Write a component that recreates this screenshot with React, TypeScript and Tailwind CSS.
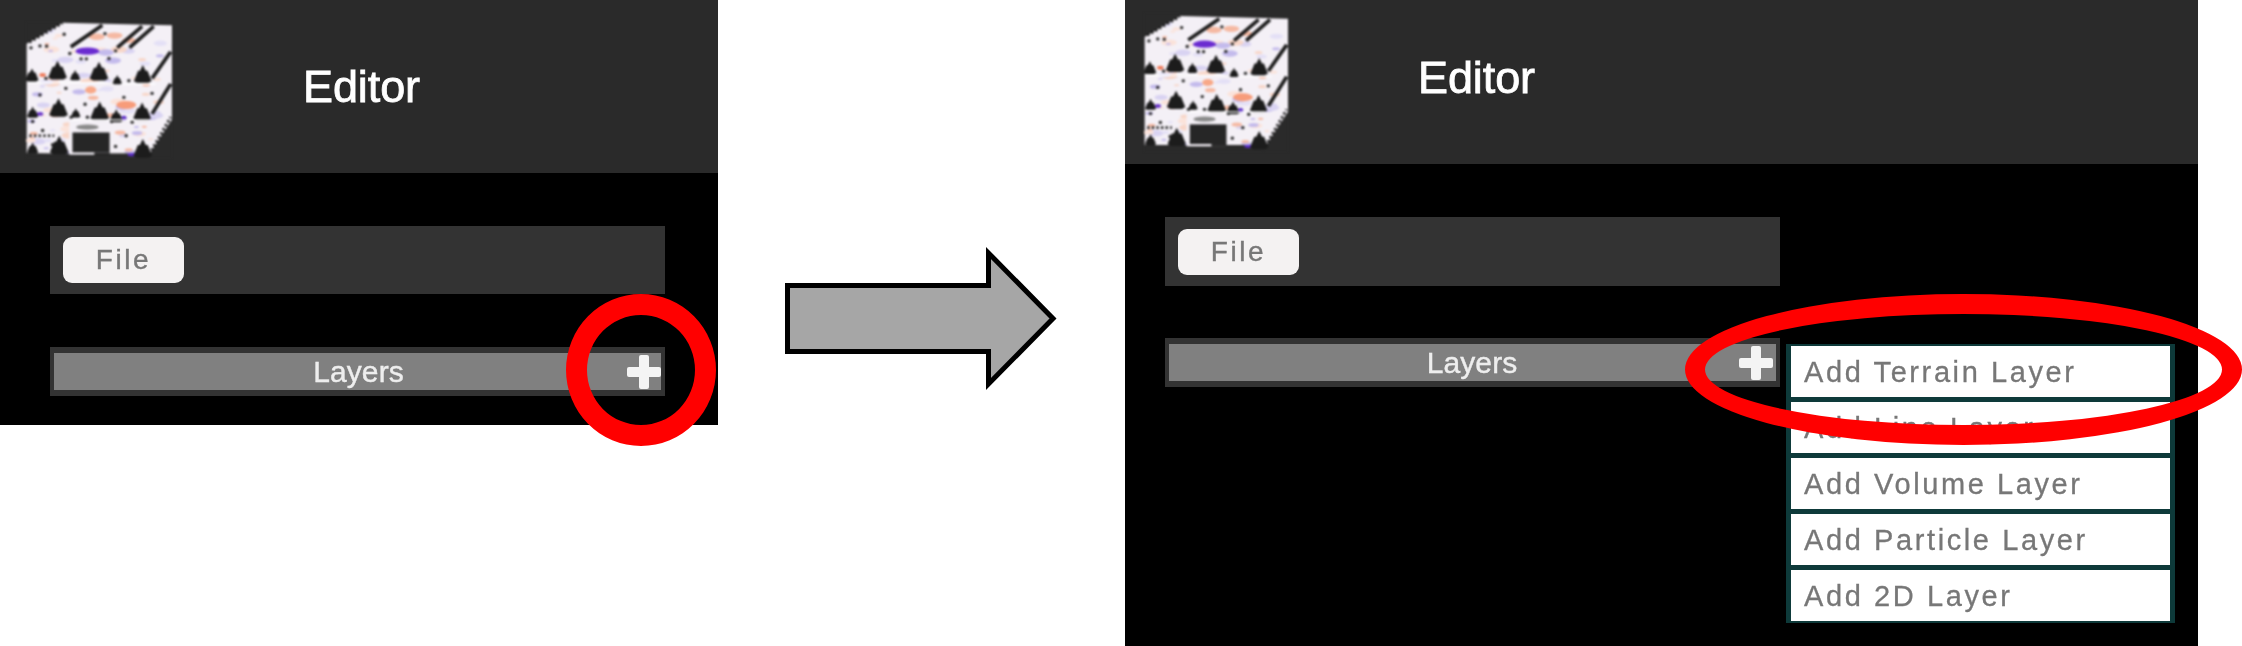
const trees = [
  [145, 152, 1], [270, 155, 1], [402, 165, 0.95], [68, 175, 0.7],
  [148, 265, 1], [272, 275, 1], [400, 278, 0.95], [70, 290, 0.6], [322, 298, 0.7],
  [150, 378, 1], [402, 388, 1], [70, 398, 0.6], [198, 180, 0.55], [325, 195, 0.5], [200, 295, 0.5],
];

const specks = [
  [65, 113], [92, 107], [112, 108], [165, 72], [182, 130], [216, 146], [232, 146], [288, 70], [320, 122],
  [110, 205], [92, 255], [228, 283], [345, 262], [370, 337], [360, 212], [382, 212], [300, 145], [170, 235],
  [352, 378], [320, 410], [130, 405], [186, 322], [235, 322], [70, 335], [100, 362], [308, 335], [430, 250],
];

// pseudo random colour noise for the cube texture
const tints = ["#d9d3f2", "#f8d6c8", "#c4bbec", "#fbe3da", "#e4e0f6", "#f5b9a3"];
const noise = Array.from({ length: 90 }, (_, i) => ({
  x: 60 + Math.abs(Math.sin(i * 12.9898) * 43758.5453) % 420,
  y: 60 + Math.abs(Math.sin(i * 78.233) * 12543.1234) % 370,
  r: 8 + (i % 5) * 4,
  fill: tints[i % tints.length],
}));

const CubeLogo = ({ className }: { className: string }) => (
  <svg viewBox="50 35 440 410" className={className}>
    <polygon points="52,100 160,37 490,45 490,330 415,445 52,430" fill="#f4f0f6" />
    <g>
      {noise.map((n, i) => (
        <ellipse key={i} cx={n.x} cy={n.y} rx={n.r} ry={n.r * 0.4} fill={n.fill} />
      ))}
    </g>
    <polygon points="0,0 160,0 160,37 52,100 0,100" fill="#2a2a2a" />
    <polygon points="490,330 540,330 540,480 415,480 415,445" fill="#2a2a2a" />
    <rect x="0" y="431" width="415" height="40" fill="#2a2a2a" />
    <ellipse cx="235" cy="123" rx="36" ry="11" fill="#6a2bd0" />
    <ellipse cx="245" cy="240" rx="17" ry="11" fill="#f8a888" />
    <ellipse cx="352" cy="285" rx="30" ry="12" fill="#f79c7a" />
    <ellipse cx="345" cy="325" rx="8" ry="7" fill="#5a2bc8" />
    <ellipse cx="92" cy="312" rx="10" ry="6" fill="#6a35c8" />
    <ellipse cx="370" cy="435" rx="14" ry="5" fill="#5a2bc8" />
    <ellipse cx="100" cy="195" rx="10" ry="6" fill="#ef7a5a" />
    {/* black trees on the front face */}
    {trees.map(([x, y, s], i) => (
      <polygon
        key={i}
        points={`${x},${y} ${x + 9 * s},${y + 18 * s} ${x + 15 * s},${y + 18 * s} ${x + 28 * s},${y + 50 * s} ${x + 18 * s},${y + 56 * s} ${x - 18 * s},${y + 56 * s} ${x - 28 * s},${y + 50 * s} ${x - 15 * s},${y + 18 * s} ${x - 9 * s},${y + 18 * s}`}
        fill="#1c1c1c"
      />
    ))}
    {/* door */}
    <rect x="180" y="332" width="120" height="103" fill="#f4f0f6" />
    <rect x="190" y="368" width="112" height="60" fill="#262626" />
    <rect x="256" y="428" width="46" height="8" fill="#262626" />
    <ellipse cx="235" cy="352" rx="34" ry="8" fill="#8a8a8a" />
    {/* roof and side stripes */}
    <g stroke="#1c1c1c" strokeWidth="11" fill="none">
      <line x1="185" y1="110" x2="280" y2="45" />
      <line x1="325" y1="112" x2="400" y2="48" />
      <line x1="362" y1="112" x2="435" y2="48" />
      <line x1="430" y1="205" x2="486" y2="125" />
      <line x1="430" y1="312" x2="486" y2="222" />
    </g>
    <g stroke="#1c1c1c" strokeWidth="8" strokeDasharray="7 7" fill="none">
      <line x1="60" y1="96" x2="160" y2="38" />
      <line x1="428" y1="422" x2="486" y2="322" />
      <line x1="60" y1="378" x2="135" y2="378" />
    </g>
    {specks.map(([x, y], i) => (
      <circle key={i} cx={x} cy={y} r="5" fill="#222222" />
    ))}
    <g stroke="#ffffff" strokeWidth="4" fill="none">
      <line x1="55" y1="218" x2="300" y2="218" />
      <line x1="340" y1="222" x2="440" y2="222" />
      <line x1="185" y1="330" x2="420" y2="330" />
    </g>
  </svg>
);

const PlusMark = () => (
  <svg viewBox="0 0 34 34" className="w-[34px] h-[34px] shrink-0 blur-[0.7px]">
    <rect x="12" y="0" width="10" height="34" rx="2" fill="#f4f4f4" />
    <rect x="0" y="12" width="34" height="10" rx="2" fill="#f4f4f4" />
  </svg>
);

const EditorTop = ({ header, logo, title }: { header: string; logo: string; title: string }) => (
  <div className={`bg-[#2a2a2a] flex items-center ${header}`}>
    <CubeLogo className={`shrink-0 blur-[1px] ${logo}`} />
    <span className={`text-[45px] leading-none text-white tracking-[-0.1px] [-webkit-text-stroke:0.8px_#ffffff] blur-[0.7px] ${title}`}>
      Editor
    </span>
  </div>
);

const FileBar = ({ bar }: { bar: string }) => (
  <div className={`bg-[#333333] w-[615px] flex items-center ${bar}`}>
    <div className="bg-[#f4f2f2] rounded-[9px] h-[46px] w-[121px] flex items-center justify-center blur-[0.4px]">
      <span className="text-[28px] leading-none text-[#777777] tracking-[2.6px] [-webkit-text-stroke:0.4px_#777777] blur-[0.5px]">File</span>
    </div>
  </div>
);

const LayersBar = ({ bar }: { bar: string }) => (
  <div className={`border-x-[4px] border-y-[6px] border-[#333333] bg-[#808080] w-[615px] h-[49px] flex items-center ${bar}`}>
    <span className="flex-1 pl-[36px] text-center text-[30px] leading-none text-[#eeeeee] tracking-[0.1px] [-webkit-text-stroke:0.4px_#eeeeee] blur-[0.6px]">Layers</span>
    <PlusMark />
  </div>
);

const menuItems = ["Add Terrain Layer", "Add Line Layer", "Add Volume Layer", "Add Particle Layer", "Add 2D Layer"];

export default function App() {
  return (
    <div className="w-[2242px] h-[646px] bg-white flex items-start overflow-hidden font-['Liberation_Sans',Arial,sans-serif]">
      {/* before */}
      <div className="relative w-[718px] h-[425px] bg-black shrink-0">
        <EditorTop header="h-[173px] pl-[26px] gap-[131px]" logo="w-[146px] h-[136px] mt-[7px]" title="" />
        <FileBar bar="h-[68px] mt-[53px] ml-[50px] pl-[13px]" />
        <LayersBar bar="mt-[53px] ml-[50px]" />
        <div className="absolute left-[566px] top-[294px] w-[150px] h-[152px] rounded-[50%] border-[21px] border-[#ff0000]" />
      </div>

      <svg viewBox="0 0 274 144" className="w-[274px] h-[144px] shrink-0 ml-[67px] mt-[247px] overflow-visible">
        <polygon
          points="2.5,38.5 203.5,38.5 203.5,6 268,71.5 203.5,137 203.5,104.5 2.5,104.5"
          fill="#a6a6a6"
          stroke="#000000"
          strokeWidth="5"
        />
      </svg>

      {/* after */}
      <div className="relative w-[1073px] h-[646px] bg-black shrink-0 ml-[66px] overflow-visible">
        <EditorTop header="h-[164px] pl-[19px] gap-[130px]" logo="w-[144px] h-[139px]" title="-mt-[9px]" />
        <FileBar bar="h-[69px] mt-[53px] ml-[40px] pl-[13px]" />
        <LayersBar bar="mt-[52px] ml-[40px] pr-[3px]" />
        <div className="absolute left-[661px] top-[344px] w-[389px] h-[279px] bg-[#0e3a3a] px-[5px] py-[2px] flex flex-col gap-[5px]">
          {menuItems.map((item) => (
            <div key={item} className="bg-white h-[51px] flex items-center pl-[13px] pt-[2px]">
              <span className="text-[29px] leading-none text-[#777777] tracking-[2.6px] [-webkit-text-stroke:0.3px_#777777] blur-[0.6px] whitespace-nowrap">{item}</span>
            </div>
          ))}
        </div>
        <div className="absolute left-[560px] top-[294px] w-[557px] h-[151px] rounded-[50%] border-[20px] border-[#ff0000]" />
      </div>
    </div>
  );
}
